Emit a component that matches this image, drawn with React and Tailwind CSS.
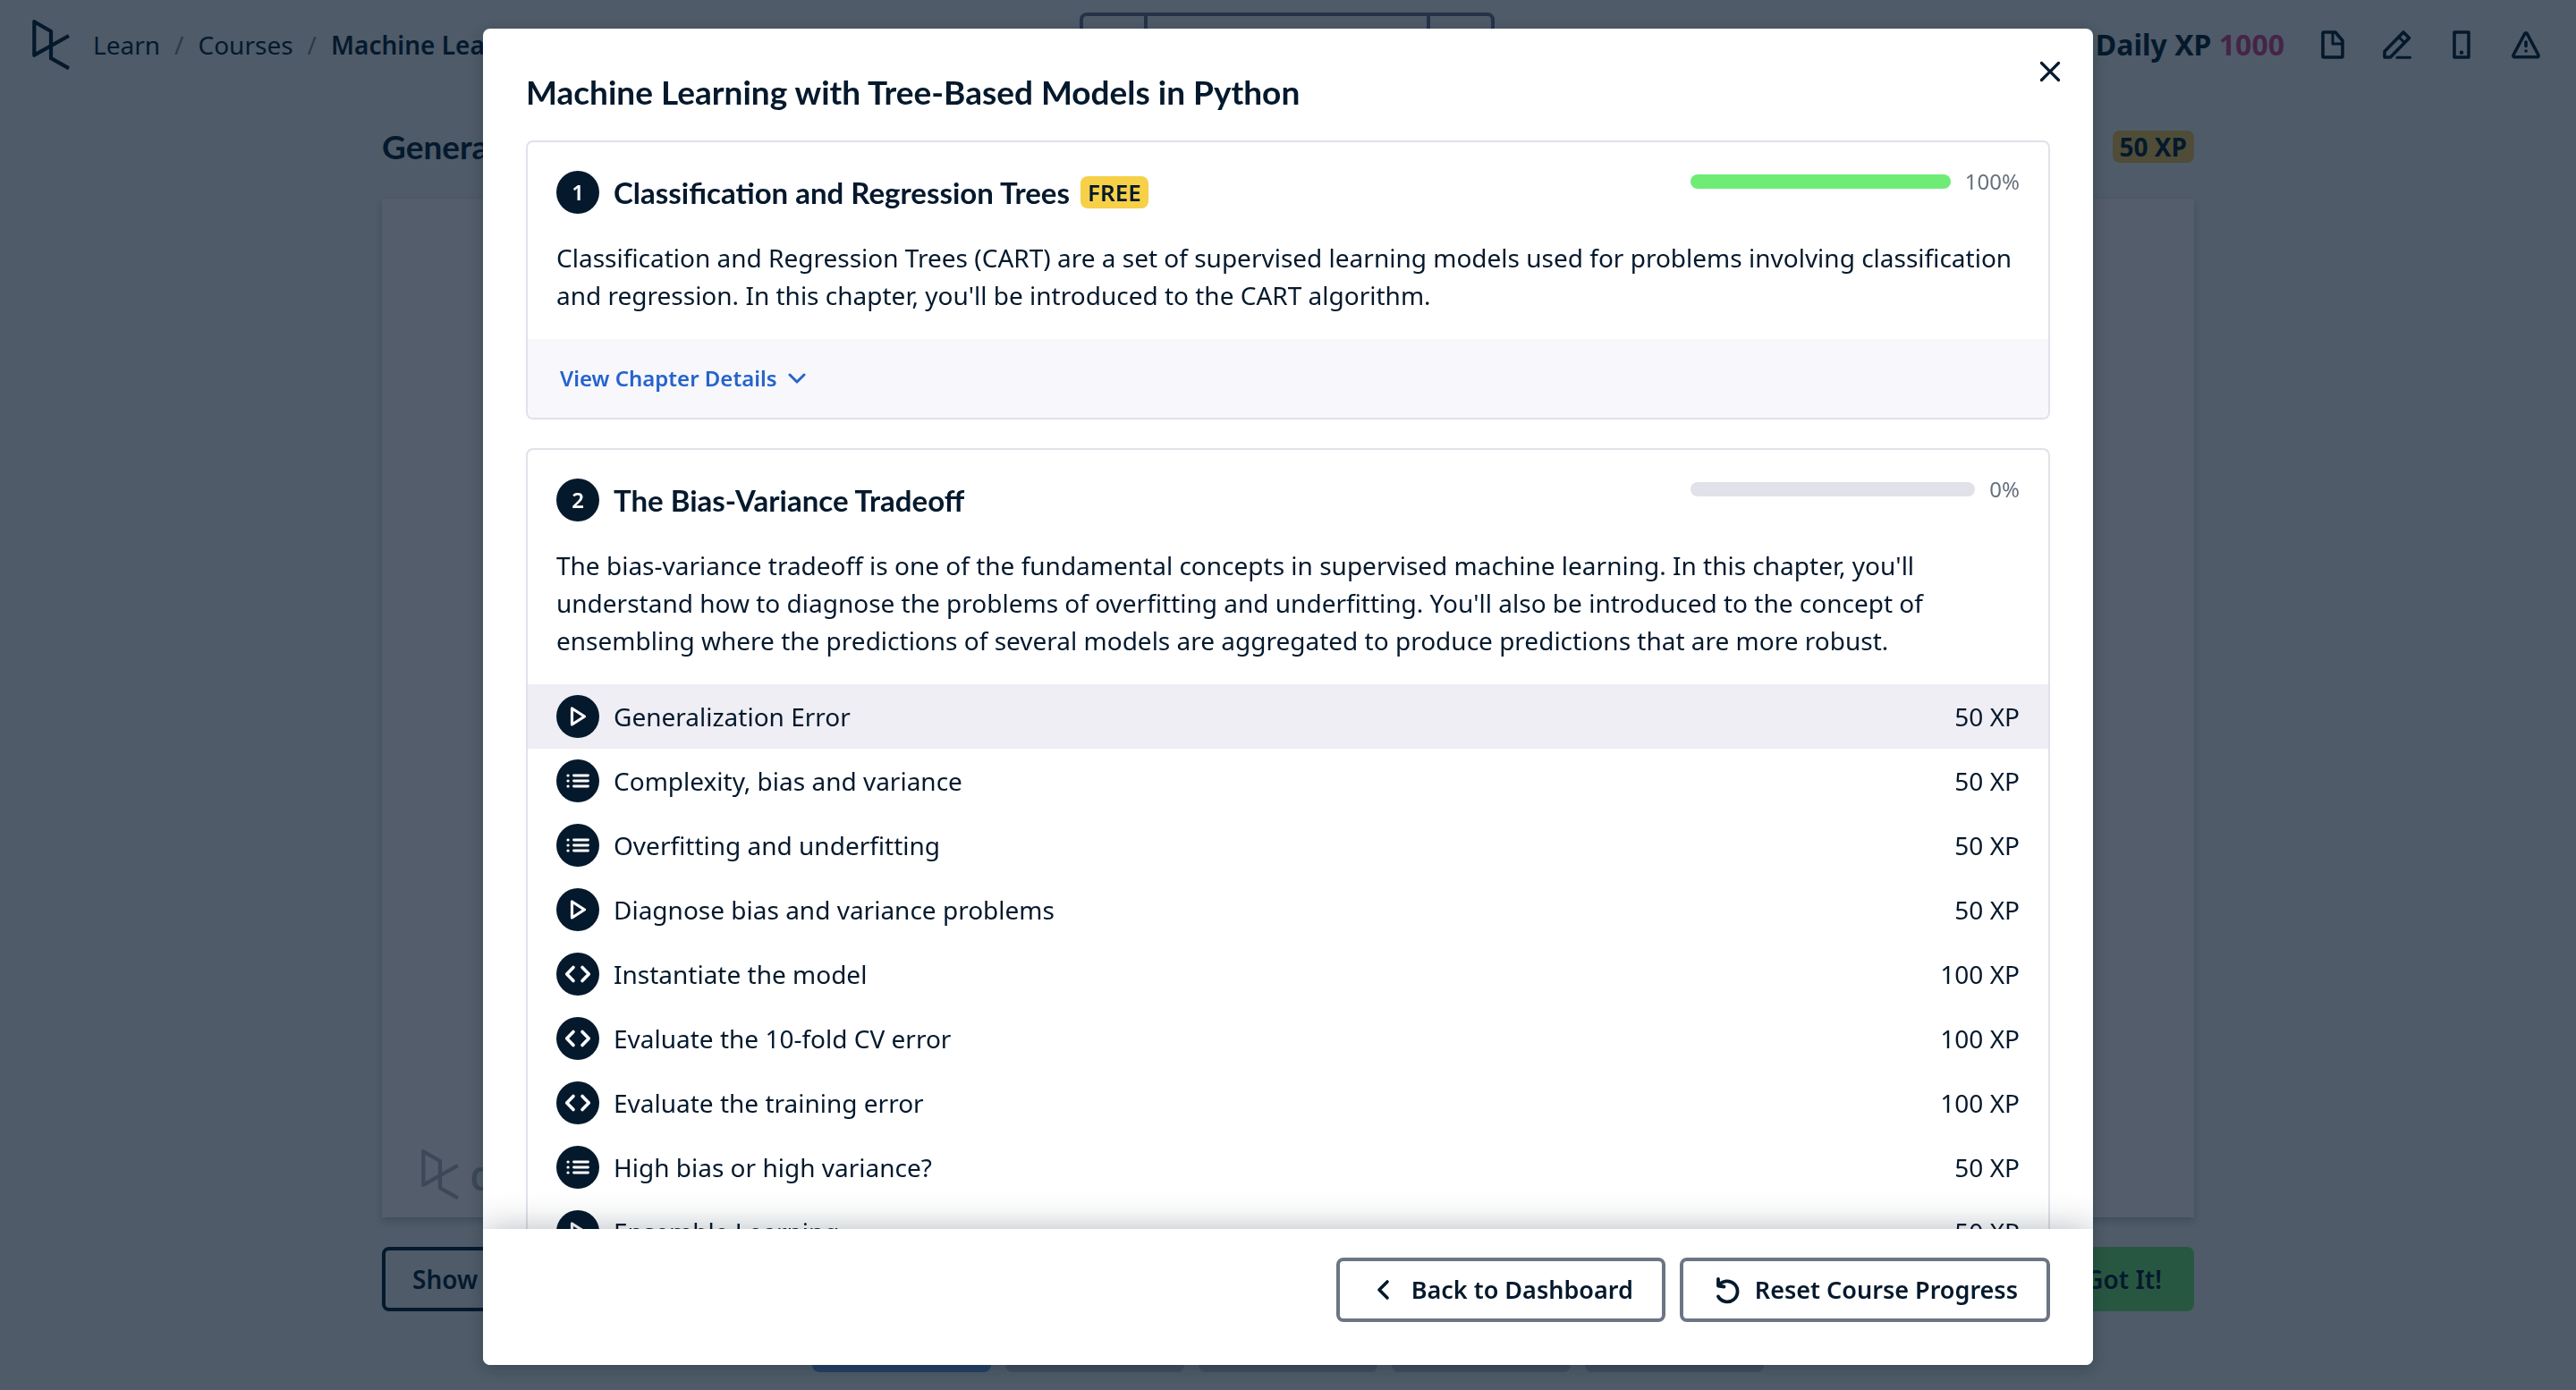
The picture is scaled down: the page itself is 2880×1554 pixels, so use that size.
import React from "react";

const stroke = {
  fill: "none",
  stroke: "currentColor",
  strokeLinecap: "round",
  strokeLinejoin: "round",
};

function Logo({ className }) {
  return (
    <svg viewBox="0 0 42 56" className={className} {...stroke} strokeLinecap="butt" strokeWidth="4.2" aria-hidden="true">
      <path d="M41 18 2.3 39.7V2.2L21 13v30.2l20 11.2" />
    </svg>
  );
}

function HeaderIcon({ label, children }) {
  return (
    <button type="button" aria-label={label} className="size-9">
      <svg viewBox="0 0 36 36" className="size-9" {...stroke} strokeWidth="3.6">
        {children}
      </svg>
    </button>
  );
}

const exerciseIcons = {
  video: <path d="M17.5 15v18L31.5 24z" strokeWidth="3.2" />,
  list: (
    <>
      <path d="M19.5 18h16M19.5 24h16M19.5 30h16" strokeWidth="2.8" />
      <path d="M13 18h.1M13 24h.1M13 30h.1" strokeWidth="3.2" />
    </>
  ),
  code: <path d="M19 16.5 11.7 24l7.3 7.5M29 16.5l7.3 7.5-7.3 7.5" strokeWidth="3.6" />,
};

const exercises = [
  { type: "video", title: "Generalization Error", xp: 50, current: true },
  { type: "list", title: "Complexity, bias and variance", xp: 50 },
  { type: "list", title: "Overfitting and underfitting", xp: 50 },
  { type: "video", title: "Diagnose bias and variance problems", xp: 50 },
  { type: "code", title: "Instantiate the model", xp: 100 },
  { type: "code", title: "Evaluate the 10-fold CV error", xp: 100 },
  { type: "code", title: "Evaluate the training error", xp: 100 },
  { type: "list", title: "High bias or high variance?", xp: 50 },
  { type: "video", title: "Ensemble Learning", xp: 50 },
];

function Exercise({ type, title, xp, current }) {
  return (
    <li>
      <a
        href="#exercise"
        aria-current={current ? "step" : undefined}
        className={`flex h-[72px] items-center gap-4 px-8 ${current ? "bg-[#efeef4]" : ""}`}
      >
        <span className="size-12 shrink-0 rounded-full bg-[#05192d] text-white">
          <svg viewBox="0 0 48 48" className="size-12" {...stroke} aria-hidden="true">
            {exerciseIcons[type]}
          </svg>
        </span>
        <span className="flex-1">{title}</span>
        <span>{xp} XP</span>
      </a>
    </li>
  );
}

function Chapter({ number, title, free, progress, description, children }) {
  return (
    <section className="overflow-hidden rounded-lg border-2 border-[#e1e1e9]">
      <div className="px-8 pt-8 pb-7">
        <div className="mb-7 flex items-start justify-between">
          <div className="flex items-center">
            <span className="mr-4 flex size-12 items-center justify-center rounded-full bg-[#05192d] text-2xl font-semibold text-white">
              {number}
            </span>
            <h2 className="font-[Lato,sans-serif] text-[33px] leading-12 font-bold">{title}</h2>
            {free && (
              <span className="ml-3 flex h-9 items-center rounded-lg bg-[#f6d047] px-2 text-[26px] font-semibold">
                FREE
              </span>
            )}
          </div>
          <div className="flex w-[368px] items-center gap-4 text-2xl leading-6 text-[#65707c]">
            <div
              role="progressbar"
              aria-label={title}
              aria-valuenow={progress}
              aria-valuemin="0"
              aria-valuemax="100"
              className="h-4 flex-1 overflow-hidden rounded-full bg-[#e1e1e9]"
            >
              <div className="h-full bg-[#6eec76]" style={{ width: `${progress}%` }} />
            </div>
            <span>{progress}%</span>
          </div>
        </div>
        <p className="leading-[42px]">{description}</p>
      </div>
      {children}
    </section>
  );
}

function CourseDialog() {
  const outlined =
    "flex h-[72px] items-center gap-3 rounded-lg border-4 border-[#6c7583] px-8 text-[27px] font-semibold";
  return (
    <div className="fixed inset-0 flex justify-center pt-8 pb-7">
      <div
        role="dialog"
        aria-modal="true"
        aria-labelledby="course-title"
        className="relative flex w-full max-w-[1800px] flex-col overflow-hidden rounded-lg bg-white text-[28px] text-[#05192d] shadow-[0_4px_16px_rgba(5,25,45,0.3)]"
      >
        <header className="px-12 pt-12 pb-8">
          <h1 id="course-title" className="font-[Lato,sans-serif] text-[37px] leading-[45px] font-bold">
            Machine Learning with Tree-Based Models in Python
          </h1>
          <button type="button" aria-label="Close" className="absolute top-8 right-8 size-8">
            <svg viewBox="0 0 32 32" className="size-8" {...stroke} strokeWidth="3.2">
              <path d="M6.500 6.500l19 19M25.500 6.500l-19 19" />
            </svg>
          </button>
        </header>

        <div className="flex min-h-0 flex-1 flex-col gap-8 overflow-y-auto px-12 [scrollbar-width:none] *:shrink-0">
          <Chapter
            number={1}
            title="Classification and Regression Trees"
            free
            progress={100}
            description="Classification and Regression Trees (CART) are a set of supervised learning models used for problems involving classification and regression. In this chapter, you'll be introduced to the CART algorithm."
          >
            <div className="flex h-[88px] items-center bg-[#f7f7fc] px-9">
              <button type="button" className="flex items-center gap-3 text-2xl font-semibold text-[#2663cc]">
                View Chapter Details
                <svg viewBox="0 0 20 12" className="h-3 w-5" {...stroke} strokeWidth="3" aria-hidden="true">
                  <path d="M2 2l8 8 8-8" />
                </svg>
              </button>
            </div>
          </Chapter>
          <Chapter
            number={2}
            title="The Bias-Variance Tradeoff"
            progress={0}
            description="The bias-variance tradeoff is one of the fundamental concepts in supervised machine learning. In this chapter, you'll understand how to diagnose the problems of overfitting and underfitting. You'll also be introduced to the concept of ensembling where the predictions of several models are aggregated to produce predictions that are more robust."
          >
            <ul>
              {exercises.map((exercise) => (
                <Exercise key={exercise.title} {...exercise} />
              ))}
            </ul>
          </Chapter>
        </div>

        <footer className="relative flex justify-end gap-4 bg-white px-12 pt-8 pb-12 shadow-[0_0_36px_rgba(5,25,45,0.3)]">
          <button type="button" className={outlined}>
            <svg viewBox="0 0 36 36" className="size-9" {...stroke} strokeWidth="3.6" aria-hidden="true">
              <path d="M21 9l-9 9 9 9" />
            </svg>
            Back to Dashboard
          </button>
          <button type="button" className={outlined}>
            <svg viewBox="0 0 36 36" className="size-9" {...stroke} strokeWidth="3.8" aria-hidden="true">
              <path d="M7.500 13.500a11.500 11.500 0 1 1-.5 12M7 6v7.500l6.500 1" />
            </svg>
            Reset Course Progress
          </button>
        </footer>
      </div>
    </div>
  );
}

function CoursePage() {
  return (
    <div className="flex h-screen flex-col">
      <header className="grid h-[100px] grid-cols-[1fr_auto_1fr] items-center pr-[38px] pl-9">
        <nav aria-label="Breadcrumb" className="flex min-w-0 items-center whitespace-nowrap">
          <Logo className="mr-[26px] h-14 w-[42px] shrink-0" />
          <a href="#learn">Learn</a>
          <span className="mx-4 text-[#2d3a4c]">/</span>
          <a href="#courses">Courses</a>
          <span className="mx-4 text-[#2d3a4c]">/</span>
          <span className="truncate font-semibold">Machine Learning with Tree-Based Models in Python</span>
        </nav>
        <div className="flex h-[72px] w-[464px] rounded-lg border-4 border-[#263347]">
          <button type="button" aria-label="Previous" className="w-[72px] border-r-4 border-[#263347]" />
          <button type="button" aria-label="Course outline" className="flex-1" />
          <button type="button" aria-label="Next" className="w-[72px] border-l-4 border-[#263347]" />
        </div>
        <div className="flex items-center justify-end gap-9">
          <p className="text-[32px] font-bold">
            Daily XP <span className="text-[#442547]">1000</span>
          </p>
          <HeaderIcon label="Slides">
            <path d="M8.500 4H21l8 9.500V31a1 1 0 0 1-1 1H8a1 1 0 0 1-1-1V5.500A1.500 1.500 0 0 1 8.500 4z" />
            <path d="M18 4.500V17h11" strokeWidth="3" />
          </HeaderIcon>
          <HeaderIcon label="Notes">
            <path d="M4 32v-6.500L25 4l6.500 6.500L10.500 32z" />
            <path d="M20 9.500l6.500 6.500" strokeWidth="3" />
            <path d="M18 32.200h14.500" strokeWidth="3" />
          </HeaderIcon>
          <HeaderIcon label="Mobile">
            <path d="M10 4h16v28H10z" />
            <path d="M18 26.800h.1" strokeWidth="4.400" />
          </HeaderIcon>
          <HeaderIcon label="Report an issue">
            <path d="M16.800 5.500 4 29.500a1.500 1.500 0 0 0 1.300 2.200h25.400a1.500 1.500 0 0 0 1.300-2.200L19.200 5.500a1.400 1.400 0 0 0-2.400 0z" />
            <path d="M18 15v4.500M18 25h.1" />
          </HeaderIcon>
        </div>
      </header>

      <main className="mx-auto flex w-full max-w-[2026px] flex-1 flex-col pt-[41px]">
        <div className="mb-9 flex items-center justify-between">
          <h2 className="font-[Lato,sans-serif] text-[37px] leading-[45px] font-bold">Generalization Error</h2>
          <span className="flex h-9 items-center rounded-lg bg-[#4f4d38] px-2 font-bold">50 XP</span>
        </div>
        <div className="flex flex-1 items-end bg-[#545d6b] shadow-[0_4px_8px_rgba(5,25,45,0.2)]">
          <div className="flex items-center gap-3 pb-5 pl-11 text-[#3c4858]">
            <Logo className="h-14 w-[42px]" />
            <span className="text-[48px] leading-14 font-medium">datacamp</span>
          </div>
        </div>
        <div className="mt-[33px] flex justify-between font-semibold">
          <button type="button" className="h-[72px] w-[200px] rounded-lg border-4 border-[#05192d] px-[30px] text-left">
            Show
          </button>
          <button type="button" className="h-[72px] rounded-lg bg-[#285741] px-9">
            Got It!
          </button>
        </div>
      </main>

      <div className="flex justify-center gap-4 pt-10 pb-5">
        <div className="h-7 w-[200px] rounded-lg bg-[#254064]" />
        <div className="h-7 w-[200px] rounded-lg bg-[#434d5d]" />
        <div className="h-7 w-[200px] rounded-lg bg-[#434d5d]" />
        <div className="h-7 w-[200px] rounded-lg bg-[#434d5d]" />
        <div className="h-7 w-[200px] rounded-lg bg-[#434d5d]" />
      </div>
    </div>
  );
}

export default function App() {
  return (
    <div className="bg-[#4f5b68] font-['Noto_Sans',sans-serif] text-[28px] text-[#05192d]">
      <CoursePage />
      <CourseDialog />
    </div>
  );
}
